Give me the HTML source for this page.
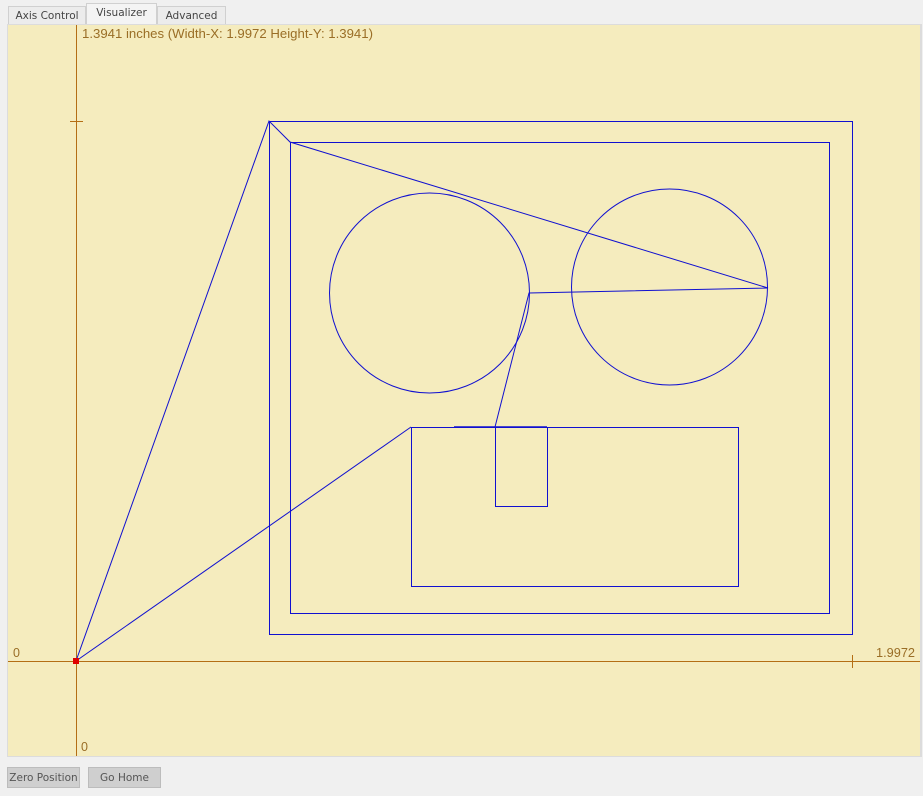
<!DOCTYPE html>
<html><head><meta charset="utf-8"><style>
html,body{margin:0;padding:0;width:923px;height:796px;background:#f0f0f0;overflow:hidden;font-family:"DejaVu Sans","Liberation Sans",sans-serif;}
.tab{position:absolute;top:5px;height:19px;font-size:10.5px;color:#444;border:1px solid #d0d0d0;border-bottom:none;background:#ececec;text-align:center;line-height:19px;box-sizing:border-box;}
.btn{position:absolute;top:767px;height:21px;background:#cfcfcf;border:1px solid #bcbcbc;font-size:10.5px;color:#555;text-align:center;line-height:20px;box-sizing:border-box;}
</style></head><body>
<div class="tab" style="left:8px;width:78px;top:6px;">Axis Control</div>
<div class="tab" style="left:86px;width:71px;top:3px;height:21px;background:#f4f4f4;">Visualizer</div>
<div class="tab" style="left:157px;width:69px;top:6px;">Advanced</div>
<svg style="position:absolute;left:0;top:0" width="923" height="796">
<rect x="7" y="24" width="915" height="733" fill="#dcdcdc"/>
<rect x="8" y="25" width="912" height="731" fill="#f5ecbe"/>
<g stroke="#b46e14" stroke-width="1" fill="none">
<line x1="8" y1="661.5" x2="920" y2="661.5"/>
<line x1="76.5" y1="25" x2="76.5" y2="756"/>
<line x1="70" y1="121.5" x2="83" y2="121.5"/>
<line x1="852.5" y1="655" x2="852.5" y2="668"/>
</g>
<g font-family="Liberation Sans,sans-serif" font-size="12.5" fill="#9a6e26">
<text x="82" y="38" textLength="291" lengthAdjust="spacingAndGlyphs">1.3941 inches  (Width-X: 1.9972  Height-Y: 1.3941)</text>
<text x="13" y="657">0</text>
<text x="876" y="657" textLength="39" lengthAdjust="spacingAndGlyphs">1.9972</text>
<text x="81" y="751">0</text>
</g>
<g stroke="#1010d0" stroke-width="1" fill="none">
<rect x="269.5" y="121.5" width="583" height="513"/>
<rect x="290.5" y="142.5" width="539" height="471"/>
<circle cx="429.5" cy="293" r="100"/>
<circle cx="669.5" cy="287" r="98"/>
<rect x="411.5" y="427.5" width="327" height="159"/>
<rect x="495.5" y="427.5" width="52" height="79"/>
<polyline points="76,661 269,121 290,142 768,288 529,293 495,427"/>
<line x1="76" y1="661" x2="411" y2="427"/>
<line x1="454" y1="427" x2="547" y2="427" stroke-width="1.5"/>
</g>
<rect x="73" y="658" width="6" height="6" fill="#e00000"/>
</svg>
<div class="btn" style="left:7px;width:73px;">Zero Position</div>
<div class="btn" style="left:88px;width:73px;">Go Home</div>
</body></html>
